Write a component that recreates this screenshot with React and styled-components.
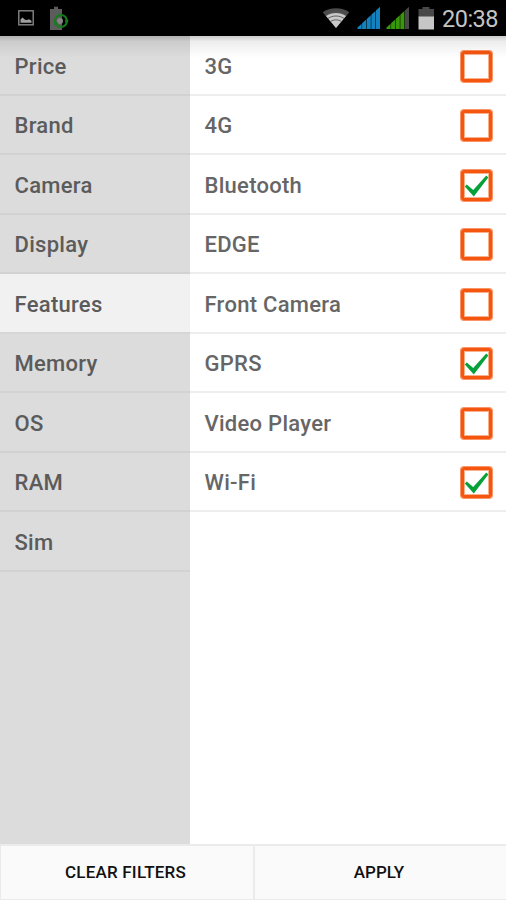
import { useState } from 'react';
import styled, { createGlobalStyle } from 'styled-components';

const GlobalStyle = createGlobalStyle`
  *,
  *::before,
  *::after {
    box-sizing: border-box;
  }

  body {
    margin: 0;
    font-family: Roboto, 'Liberation Sans', sans-serif;
    background-color: #fff;
  }
`;

const Screen = styled.div`
  display: flex;
  flex-direction: column;
  height: 900px;
  width: 506px;
  overflow: hidden;
`;

const StyledStatusBar = styled.header`
  display: flex;
  align-items: center;
  justify-content: space-between;
  height: 36px;
  padding: 0 8px 0 18px;
  background-color: #000;
`;

const StatusGroup = styled.div`
  display: flex;
  align-items: center;
`;

const Clock = styled.time`
  width: 56px;
  margin-left: 7px;
  padding-top: 2px;
  font-size: 23.5px;
  line-height: 34px;
  letter-spacing: -0.5px;
  white-space: nowrap;
  color: #c4c4c4;
`;

const Main = styled.main`
  position: relative;
  display: grid;
  grid-template-columns: 190px 1fr;
  flex: 1;

  /* shadow dropped by the status bar */
  &::before {
    content: '';
    position: absolute;
    inset: 0 0 auto;
    height: 22px;
    background: linear-gradient(rgba(0, 0, 0, 0.2), rgba(0, 0, 0, 0.07) 25%, transparent);
    pointer-events: none;
  }
`;

const Sidebar = styled.nav`
  background-color: #dcdcdc;
`;

const BaseRow = styled.div`
  display: flex;
  align-items: center;
  width: 100%;
  height: 59.5px;
  padding: 3px 14px 0 14.5px;
  font-size: 22px;
  font-weight: 500;
  letter-spacing: 0.28px;
  color: #5b5b5b;
  cursor: pointer;
`;

const Category = styled(BaseRow)`
  border-bottom: 2px solid ${props => (props.$active ? '#d6d6d6' : '#d2d2d2')};
  background-color: ${props => (props.$active ? '#f1f1f1' : 'transparent')};
`;

const Option = styled(BaseRow)`
  justify-content: space-between;
  border-bottom: 2px solid #eee;
  color: #666;
`;

const Box = styled.span`
  display: grid;
  place-items: center;
  width: 31px;
  height: 31px;
  border: 3px solid #f4550f;
  border-radius: 3px;
  box-shadow: 0 0 0 1px #fa9466, inset 0 0 0 1px #fbb08c;
`;

const Footer = styled.footer`
  display: grid;
  grid-template-columns: 254px 1fr;
  height: 56px;
  border: 1px solid #ebebeb;
  border-width: 2px 0 1px 1px;
`;

const FooterButton = styled.button`
  padding: 0 3px 2px 0;
  border: none;
  border-right: ${props => (props.$divided ? '2px solid #ebebeb' : 'none')};
  font-family: inherit;
  font-size: 17px;
  font-weight: 500;
  letter-spacing: ${props => props.$spacing || '0'};
  color: #111;
  background-color: #fafafa;
`;

const StatusIcon = styled.svg`
  margin-left: ${props => props.$gap || 0}px;
`;

const categories = [
  'Price',
  'Brand',
  'Camera',
  'Display',
  'Features',
  'Memory',
  'OS',
  'RAM',
  'Sim',
];

const features = [
  '3G',
  '4G',
  'Bluetooth',
  'EDGE',
  'Front Camera',
  'GPRS',
  'Video Player',
  'Wi-Fi',
];

function PictureIcon() {
  return (
    <StatusIcon width='16' height='16' viewBox='0 0 16 16'>
      <rect x='0.8' y='0.8' width='14.4' height='14' fill='none' stroke='#858585' strokeWidth='1.4' />
      <path d='M2.5 12.8V9.5l2-2 2.5 2.2 2 .3 2-.8 2.5 1.5v2.1z' fill='#a0a0a0' />
    </StatusIcon>
  );
}

function BatterySyncIcon() {
  return (
    <StatusIcon $gap={15} width='21' height='25' viewBox='0 0 21 25'>
      <path d='M5 3V.8h4V3h4v21H1V3z' fill='#5c5c5c' />
      <circle cx='11' cy='15' r='3' fill='#858585' />
      <circle cx='12' cy='15' r='6' fill='none' stroke='#157d1b' strokeWidth='2' />
      <path d='M9.5 6.8l4 2.2-3.500 2.500zM5 16l4 .5-3 3.500zM16.500 12l3.300 3-3.800 1.800z' fill='#157d1b' />
    </StatusIcon>
  );
}

function WifiIcon() {
  return (
    <StatusIcon width='28' height='22' viewBox='0 0 28 22'>
      <path d='M14 21L.7 5.2C7.5-.2 20.5-.2 27.3 5.2z' fill='#4b4b4b' />
      <path d='M14 21L4 9.1c5.4-4 14.6-4 20 0z' fill='#c9c9c9' />
      <g fill='none' stroke='#555' strokeWidth='0.9'>
        <path d='M3.3 8.2c6-4.4 15.4-4.4 21.4 0' />
        <path d='M6 11.4c4.5-3.2 11.5-3.2 16 0' />
        <path d='M8.7 14.5c3-2.2 7.6-2.2 10.6 0' />
      </g>
    </StatusIcon>
  );
}

const signalBars = [0, 1, 2, 3, 4];

function SignalIcon({ color, gap, full = 5 }) {
  return (
    <StatusIcon $gap={gap} width='24' height='24' viewBox='0 0 24 24'>
      {signalBars.map(i => {
        const left = i * 4.6 + 0.5;
        const right = left + 4.1;
        return (
          <path
            key={i}
            d={`M${left} 23V${22 - left * 0.92}L${right} ${22 - right * 0.92}V23z`}
            fill={i < full ? color : '#484848'}
          />
        );
      })}
    </StatusIcon>
  );
}

function BatteryIcon() {
  return (
    <StatusIcon $gap={8} width='17' height='24' viewBox='0 0 17 24'>
      <path d='M4.5 3V1h7v2H16v8H.5V3z' fill='#484848' />
      <path d='M.5 10.5H16V23.5H.5z' fill='#c6c6c6' />
    </StatusIcon>
  );
}

function StatusBar() {
  return (
    <StyledStatusBar>
      <StatusGroup>
        <PictureIcon />
        <BatterySyncIcon />
      </StatusGroup>
      <StatusGroup>
        <WifiIcon />
        <SignalIcon gap={7} color='#1482be' />
        <SignalIcon gap={5} color='#38960c' full={4} />
        <BatteryIcon />
        <Clock>20:38</Clock>
      </StatusGroup>
    </StyledStatusBar>
  );
}

function Checkbox({ checked }) {
  return (
    <Box>
      {checked && (
        <svg width='25' height='25' viewBox='0 0 25 25'>
          <path d='M.8 13.4l2-2 6.4 5.6L22.3 2.6l2 1.8L9.8 23.5z' fill='#07a03a' />
        </svg>
      )}
    </Box>
  );
}

function App() {
  const [category, setCategory] = useState('Features');
  const [selected, setSelected] = useState(['Bluetooth', 'GPRS', 'Wi-Fi']);

  function toggle(name) {
    setSelected(cur =>
      cur.includes(name) ? cur.filter(item => item !== name) : [...cur, name]
    );
  }

  return (
    <>
      <GlobalStyle />
      <Screen>
        <StatusBar />
        <Main>
          <Sidebar>
            {categories.map(name => (
              <Category
                key={name}
                $active={name === category}
                onClick={() => setCategory(name)}
              >
                {name}
              </Category>
            ))}
          </Sidebar>
          <section>
            {features.map(name => (
              <Option
                key={name}
                role='checkbox'
                aria-checked={selected.includes(name)}
                onClick={() => toggle(name)}
              >
                {name}
                <Checkbox checked={selected.includes(name)} />
              </Option>
            ))}
          </section>
        </Main>
        <Footer>
          <FooterButton $divided $spacing='0.2px' onClick={() => setSelected([])}>
            CLEAR FILTERS
          </FooterButton>
          <FooterButton>APPLY</FooterButton>
        </Footer>
      </Screen>
    </>
  );
}

export default App;
